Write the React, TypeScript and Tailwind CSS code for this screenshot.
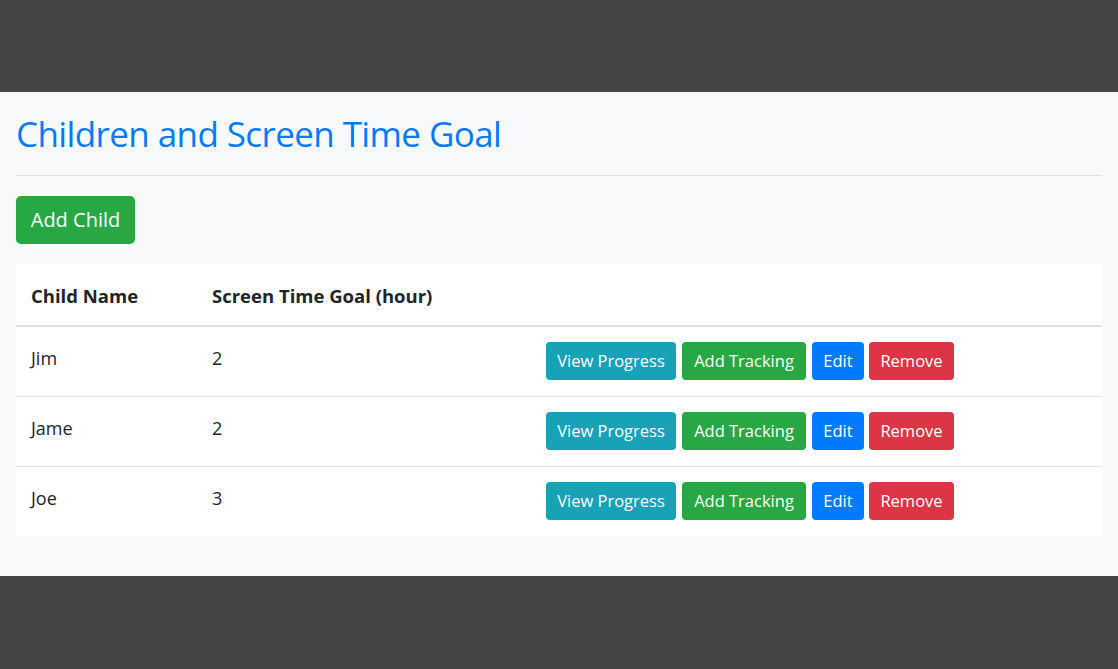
const rows = [
  { name: "Jim", goal: 2 },
  { name: "Jame", goal: 2 },
  { name: "Joe", goal: 3 },
]

export default function App() {
  return (
    <div className="min-h-screen bg-[#444444] pt-[92px] font-['Open_Sans',sans-serif] text-[#212529]">
      <div className="bg-[#f8f9fa] px-4 pt-[18px] pb-[40px]">
        <h1 className="text-[35px] leading-[48px] tracking-[-0.6px] font-normal text-[#007bff]">
          Children and Screen Time Goal
        </h1>
        <hr className="mt-[17px] border-t border-[#dee2e6]" />
        <button className="mt-[20px] h-[48px] w-[119px] rounded-[5px] bg-[#28a745] text-[20px] text-white">
          Add Child
        </button>
        <table className="mt-[20px] w-full bg-white text-left text-[18px]">
          <thead>
            <tr className="border-b-2 border-[#dee2e6]">
              <th className="h-[62px] w-[181px] px-[15px] pt-[20px] align-top text-[18.5px] font-bold leading-6">Child Name</th>
              <th className="w-[334px] px-[15px] pt-[20px] align-top text-[18.5px] font-bold leading-6">Screen Time Goal (hour)</th>
              <th className="px-[15px]"></th>
            </tr>
          </thead>
          <tbody>
            {rows.map((r, i) => (
              <tr key={r.name} className={i < rows.length - 1 ? "border-b border-[#dee2e6]" : ""}>
                <td className="px-[15px] pt-[19px] align-top leading-6">{r.name}</td>
                <td className="px-[15px] pt-[19px] align-top leading-6">{r.goal}</td>
                <td className="px-[15px] pt-[15px] pb-[16px] align-top text-[16.5px]">
                  <div className="flex">
                    <button className="h-[38px] w-[130px] rounded bg-[#17a2b8] text-white">View Progress</button>
                    <button className="ml-[6px] h-[38px] w-[124px] rounded bg-[#28a745] text-white">Add Tracking</button>
                    <button className="ml-[6px] h-[38px] w-[52px] rounded bg-[#007bff] text-white">Edit</button>
                    <button className="ml-[5px] h-[38px] w-[85px] rounded bg-[#dc3545] text-white">Remove</button>
                  </div>
                </td>
              </tr>
            ))}
          </tbody>
        </table>
      </div>
    </div>
  )
}
